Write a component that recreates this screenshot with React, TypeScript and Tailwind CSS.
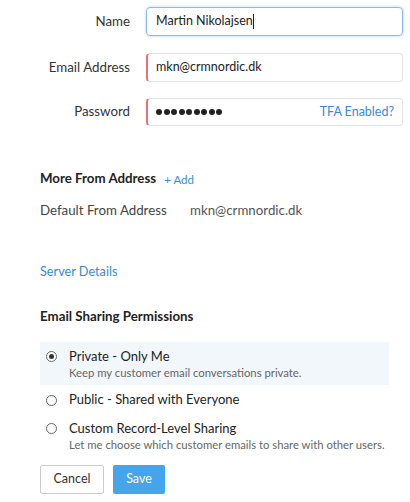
import React from "react";

function Radio({ checked }: { checked?: boolean }) {
  return (
    <span className="w-[11px] h-[11px] rounded-full border border-[#666] flex items-center justify-center bg-white">
      {checked && <span className="w-[5px] h-[5px] rounded-full bg-[#333]"></span>}
    </span>
  );
}

export default function App() {
  const font = { fontFamily: "Lato, 'Noto Sans', sans-serif" };
  return (
    <div className="w-[410px] h-[502px] bg-white text-[#333] relative overflow-hidden" style={font}>
      <div className="pt-[7px] pl-[40px] pr-[7px]">
        {/* Name */}
        <div className="flex items-center h-[29px]">
          <div className="w-[90px] text-right text-[13.3px] text-[#333]">Name</div>
          <div className="ml-[16px] flex-1 h-[29px] rounded-[4px] border border-[#8ab8f0] shadow-[0_0_3px_rgba(100,160,240,0.5)] flex items-center pl-[9px] text-[12.5px] text-[#222]">
            Martin Nikolajsen<span className="inline-block w-px h-[15px] bg-[#222]"></span>
          </div>
        </div>
        {/* Email */}
        <div className="flex items-center h-[29px] mt-[17px]">
          <div className="w-[90px] text-right text-[13.3px] text-[#333]">Email Address</div>
          <div className="ml-[16px] flex-1 h-[29px] rounded-[4px] border border-[#e3e3e3] border-l-2 border-l-[#ec7070] flex items-center pl-[8px] text-[12.5px] text-[#222]">
            mkn@crmnordic.dk
          </div>
        </div>
        {/* Password */}
        <div className="flex items-center h-[28px] mt-[16px]">
          <div className="w-[90px] text-right text-[13.3px] text-[#333]">Password</div>
          <div className="ml-[16px] flex-1 h-[28px] rounded-[4px] border border-[#e3e3e3] border-l-2 border-l-[#ec7070] flex items-center pl-[8px] pr-[8px]">
            <span className="flex gap-[1.5px] flex-1">
              {Array.from({ length: 9 }).map((_, i) => (
                <span key={i} className="inline-block w-[6px] h-[6px] rounded-full bg-[#222]"></span>
              ))}
            </span>
            <span className="text-[12.5px] text-[#3a8ad6]">TFA Enabled?</span>
          </div>
        </div>

        {/* More From Address */}
        <div className="mt-[43px] h-[20px] flex items-center">
          <span className="text-[13.3px] font-bold text-[#222]">More From Address</span>
          <span className="ml-[8px] text-[11.5px] text-[#3a8ad6] pt-[2px]">+ Add</span>
        </div>
        <div className="mt-[12px] h-[20px] flex items-center text-[13.3px]">
          <span className="text-[#444] w-[150px]">Default From Address</span>
          <span className="text-[#555]">mkn@crmnordic.dk</span>
        </div>

        <div className="mt-[41px] h-[20px] flex items-center text-[12.7px] text-[#3a8ad6]">Server Details</div>

        <div className="mt-[25px] h-[20px] flex items-center text-[13.3px] font-bold text-[#222]">Email Sharing Permissions</div>

        {/* Radios */}
        <div className="mt-[15px] w-[349px]">
          <div className="bg-[#f2f7fc] h-[43px] flex pt-[6px]">
            <div className="w-[22px] flex justify-center pt-[3px]">
              <Radio checked />
            </div>
            <div className="ml-[7px] flex flex-col">
              <span className="text-[13px] text-[#222] leading-[17px]">Private - Only Me</span>
              <span className="text-[11.3px] text-[#666] leading-[15px] whitespace-nowrap">Keep my customer email conversations private.</span>
            </div>
          </div>
          <div className="h-[30px] flex items-center">
            <div className="w-[22px] flex justify-center">
              <Radio />
            </div>
            <span className="ml-[7px] text-[13px] text-[#222]">Public - Shared with Everyone</span>
          </div>
          <div className="flex pt-[5px]">
            <div className="w-[22px] flex justify-center pt-[3px]">
              <Radio />
            </div>
            <div className="ml-[7px] flex flex-col">
              <span className="text-[13px] text-[#222] leading-[17px]">Custom Record-Level Sharing</span>
              <span className="text-[11.3px] text-[#666] leading-[15px] whitespace-nowrap">Let me choose which customer emails to share with other users.</span>
            </div>
          </div>
        </div>

        {/* Buttons */}
        <div className="mt-[13px] flex gap-[9px]">
          <button className="w-[64px] h-[29px] border border-[#ccc] rounded-[2px] bg-white text-[12.5px] text-[#333]">Cancel</button>
          <button className="w-[52px] h-[29px] rounded-[2px] bg-[#45a4ea] text-[12.5px] text-white">Save</button>
        </div>
      </div>
    </div>
  );
}
